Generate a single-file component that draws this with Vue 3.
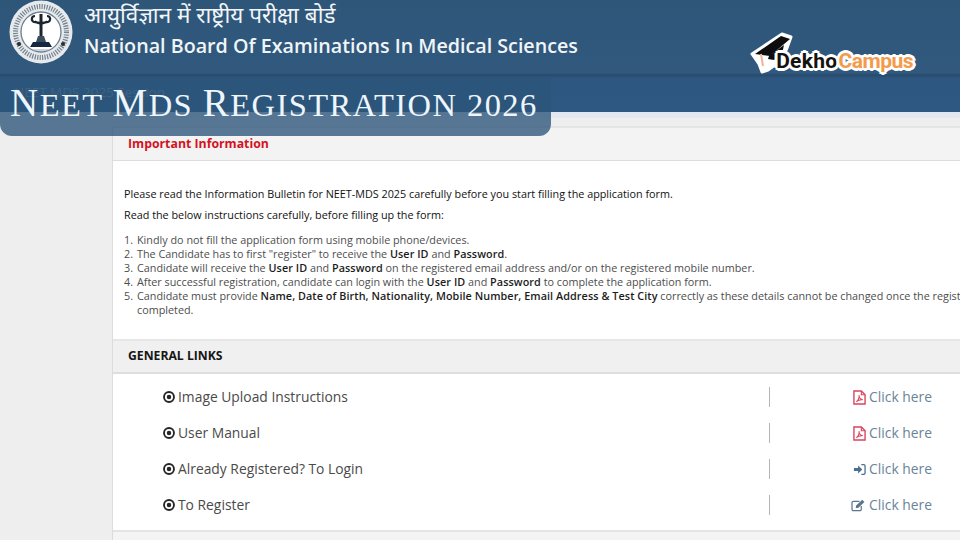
<script setup>
const items = [
  ['Kindly do not fill the application form using mobile phone/devices.'],
  ['The Candidate has to first "register" to receive the ', '*User ID', ' and ', '*Password', '.'],
  ['Candidate will receive the ', '*User ID', ' and ', '*Password', ' on the registered email address and/or on the registered mobile number.'],
  ['After successful registration, candidate can login with the ', '*User ID', ' and ', '*Password', ' to complete the application form.'],
  ['Candidate must provide ', '*Name, Date of Birth, Nationality, Mobile Number, Email Address & Test City', ' correctly as these details cannot be changed once the registration is', '\ncompleted.'],
]
const parsed = items.map(parts => parts.map(p => ({
  bold: p.startsWith('*'),
  wrap: p.startsWith('\n'),
  text: p.replace(/^[*\n]/, ''),
})))
const links = [
  { label: 'Image Upload Instructions', icon: 'pdf' },
  { label: 'User Manual', icon: 'pdf' },
  { label: 'Already Registered? To Login', icon: 'signin' },
  { label: 'To Register', icon: 'edit' },
]
</script>

<template>
  <div class="page">
    <header class="top">
      <div class="brand">
        <svg class="seal" viewBox="0 0 64 64" width="64" height="64">
          <circle cx="32" cy="32" r="31.500" fill="#e6eaed" />
          <circle cx="32" cy="32" r="25.500" fill="none" stroke="#75838f" stroke-width="5" stroke-dasharray="1.200 1.300" />
          <circle cx="32" cy="32" r="20" fill="#fff" stroke="#6d7f90" stroke-width="1.300" />
          <circle cx="10" cy="44" r="2" fill="#2b2f33" />
          <circle cx="54" cy="44" r="2" fill="#2b2f33" />
          <path d="M26 16c-4 0-4 5-1 6 3 1 11 1 14 0 3-1 3-6-1-6" fill="none" stroke="#1a2530" stroke-width="2.200" />
          <path d="M26 21c4 4 8 4 12 0" fill="none" stroke="#1a2530" stroke-width="1.500" />
          <path d="M32 14v26" stroke="#1a2530" stroke-width="3" />
          <path d="M29 36h6l2 6H27z" fill="#3b4c5d" />
          <path d="M24 42h16l3 5H21z" fill="#14283f" />
          <path d="M23 50h18" stroke="#9aa6b1" stroke-width="1" />
        </svg>
        <div class="names">
          <div class="hindi">आयुर्विज्ञान में राष्ट्रीय परीक्षा बोर्ड</div>
          <div class="english">National Board Of Examinations In Medical Sciences</div>
        </div>
      </div>
      <div class="logo">
        <svg class="cap" viewBox="0 0 46 44" width="46" height="44">
          <path d="M3 24 33 4l9 3-4 11-5 12-14 10-6 2-3-8z" fill="#fff" stroke="#fff" stroke-width="3" stroke-linejoin="round" />
          <path d="M6 24 32 6l9 3-20 17z" fill="#0d0d0d" />
          <path d="M20 26 35 15l-2 9-8 6-6-1z" fill="#0d0d0d" />
          <path d="M12 24l2 12" stroke="#eeb596" stroke-width="2" />
        </svg>
        <span class="dekho">Dekho</span><span class="campus">Campus</span>
      </div>
      <div class="ghost">NEET MDS 2025 Session</div>
    </header>

    <div class="banner"><span class="big">N</span>EET <span class="big">M</span>DS <span class="big">R</span>EGISTRATION 2026</div>

    <main class="content">
      <section class="card">
        <h2 class="info-head">Important Information</h2>
        <div class="info-body">
          <p class="lead">Please read the Information Bulletin for NEET-MDS 2025 carefully before you start filling the application form.</p>
          <p class="lead second">Read the below instructions carefully, before filling up the form:</p>
          <ol class="rules">
            <li v-for="(parts, i) in parsed" :key="i">
              <span class="num">{{ i + 1 }}.</span>
              <span class="rule-text">
                <template v-for="(p, j) in parts" :key="j">
                  <span v-if="p.wrap" class="wrapped">{{ p.text }}</span>
                  <b v-else-if="p.bold">{{ p.text }}</b>
                  <template v-else>{{ p.text }}</template>
                </template>
              </span>
            </li>
          </ol>
        </div>
        <h2 class="links-head">GENERAL LINKS</h2>
        <div class="links">
          <div v-for="l in links" :key="l.label" class="link-row">
            <div class="link-label">
              <svg class="dot" viewBox="0 0 14 14" width="12" height="12">
                <circle cx="7" cy="7" r="5.800" fill="none" stroke="#262626" stroke-width="2.200" />
                <circle cx="7" cy="7" r="2.600" fill="#262626" />
              </svg>
              <span>{{ l.label }}</span>
            </div>
            <div class="link-action">
              <svg v-if="l.icon === 'pdf'" class="ico" viewBox="0 0 14 16" width="13" height="15">
                <path d="M1 1h8l4 4v10H1z" fill="#fff" stroke="#d9455f" stroke-width="1.500" />
                <path d="M9 1v4h4" fill="none" stroke="#d9455f" stroke-width="1.200" />
                <path d="M3.500 12.500c2-1 3.500-4.500 3-7 0 2.500 2 4.500 4 5-2.500-.5-5 .5-7 2z" fill="none" stroke="#d9455f" stroke-width="1.100" />
              </svg>
              <svg v-else-if="l.icon === 'signin'" class="ico" viewBox="0 0 14 14" width="13" height="13">
                <path d="M1 5.300h4.500V2.800L10 7l-4.500 4.200V8.700H1z" fill="#4c6f8f" />
                <path d="M9 1.800h2.500a1.500 1.500 0 0 1 1.500 1.500v7.400a1.500 1.500 0 0 1-1.500 1.500H9" fill="none" stroke="#4c6f8f" stroke-width="1.400" />
              </svg>
              <svg v-else class="ico" viewBox="0 0 16 14" width="15" height="13">
                <path d="M11 7.500v3.500a1.500 1.500 0 0 1-1.500 1.500H2.500A1.500 1.500 0 0 1 1 11V4a1.500 1.500 0 0 1 1.500-1.500H9" fill="none" stroke="#5b768d" stroke-width="1.300" />
                <path d="M5.500 7 12 .8l2.400 2.400L8 9.500l-3 .5z" fill="#5b768d" />
              </svg>
              <span>Click here</span>
            </div>
          </div>
        </div>
        <div class="foot"></div>
      </section>
    </main>
  </div>
</template>

<style>
html, body { margin: 0; padding: 0; }
</style>

<style scoped>
.page {
  position: relative;
  width: 960px;
  height: 540px;
  overflow: hidden;
  background: #eeeeee;
  font-family: "Open Sans", "Noto Sans", sans-serif;
}
.top {
  position: relative;
  height: 112px;
  box-sizing: border-box;
  padding: 0 47px 0 9px;
  display: flex;
  justify-content: space-between;
  align-items: flex-start;
  background: linear-gradient(#2d5679 0, #31597e 73px, #284b6c 75px, #2d5680 78px, #2e5882 112px);
}
.brand { display: flex; gap: 11px; }
.seal { flex: none; }
.names { color: #f1f5f8; }
.hindi {
  font-size: 22.500px;
  line-height: 30px;
  font-family: "Noto Sans", "DejaVu Sans", sans-serif;
  white-space: nowrap;
}
.english {
  margin-top: 4px;
  font-size: 19.700px;
  line-height: 24px;
  font-weight: 600;
  white-space: nowrap;
}
.logo {
  position: relative;
  margin-top: 46px;
  padding-left: 25px;
  height: 30px;
  display: flex;
  align-items: center;
  font-family: "Roboto", "Liberation Sans", sans-serif;
  font-weight: 700;
  font-size: 21px;
  --o: #fff;
  text-shadow: 2px 0 var(--o), -2px 0 var(--o), 0 2px var(--o), 0 -2px var(--o), 2px 2px var(--o), -2px 2px var(--o), 2px -2px var(--o), -2px -2px var(--o), 3px 0 var(--o), -3px 0 var(--o), 0 3px var(--o), 0 -3px var(--o);
}
.cap { position: absolute; left: -2px; top: -16px; }
.dekho { position: relative; color: #14130f; letter-spacing: .3px; }
.campus { position: relative; color: #f39a4c; margin-left: 1px; letter-spacing: -.5px; }
.ghost {
  position: absolute;
  left: 14px;
  top: 84px;
  font-size: 13.500px;
  line-height: 16px;
  color: #7f90a2;
}
.banner {
  position: absolute;
  left: 0;
  top: 78px;
  width: 551px;
  height: 58px;
  box-sizing: border-box;
  padding: 2px 0 0 10px;
  border-radius: 0 0 12px 12px;
  background: rgba(44, 84, 122, .78);
  color: #eef6fb;
  font-family: "Liberation Serif", serif;
  font-size: 32.500px;
  line-height: 50px;
  letter-spacing: 1.450px;
  white-space: nowrap;
}
.big { font-size: 39px; line-height: 40px; }
.content {
  padding: 5px 0 0 112px;
  background: linear-gradient(90deg, #eee 112px, #e3e8f0 112px);
  background-size: 100% 6px;
  background-repeat: no-repeat;
}
.card {
  background: #fff;
  border-left: 1px solid #dcdcdc;
  height: 423px;
  margin-top: 9px;
  display: flex;
  flex-direction: column;
}
h2 { margin: 0; }
.info-head {
  height: 35px;
  box-sizing: border-box;
  padding: 7px 0 0 15px;
  background: #f3f3f3;
  border-top: 2px solid #e4e4e4;
  border-bottom: 1px solid #ddd;
  color: #d3121e;
  font-size: 12.300px;
  line-height: 17px;
  font-weight: 700;
}
.info-body {
  height: 178px;
  box-sizing: border-box;
  padding: 26px 0 0 11px;
  font-size: 10.800px;
  line-height: 14px;
  color: #4d4d4d;
  white-space: nowrap;
  overflow: hidden;
}
.lead { margin: 0; color: #111; }
.second { margin-top: 7px; }
.rules { list-style: none; margin: 11px 0 0; padding: 0; }
.rules li { display: flex; }
.num { width: 13px; flex: none; }
.rule-text b { color: #1c1c1c; font-weight: 600; letter-spacing: .07px; }
.wrapped { display: block; }
.links-head {
  height: 35px;
  box-sizing: border-box;
  padding: 7px 0 0 15px;
  background: #f0f0f0;
  border-top: 2px solid #e6e6e6;
  border-bottom: 2px solid #dedede;
  color: #161616;
  font-size: 12.200px;
  line-height: 16px;
  font-weight: 700;
}
.links { padding: 5px 0 0 50px; }
.link-row {
  height: 36px;
  display: grid;
  grid-template-columns: 606px 1fr;
  align-items: center;
  font-size: 13.850px;
  line-height: 20px;
}
.link-label { display: flex; align-items: center; gap: 3px; color: #4a4a4a; }
.link-action {
  height: 20px;
  border-left: 1.500px solid #b5b5b5;
  padding-right: 28px;
  display: flex;
  justify-content: flex-end;
  align-items: center;
  gap: 3px;
  color: #6b8499;
}
.ico { flex: none; }
.foot {
  margin-top: 7px;
  flex: 1;
  background: #f4f4f4;
  border-top: 2px solid #e4e4e4;
}
</style>
